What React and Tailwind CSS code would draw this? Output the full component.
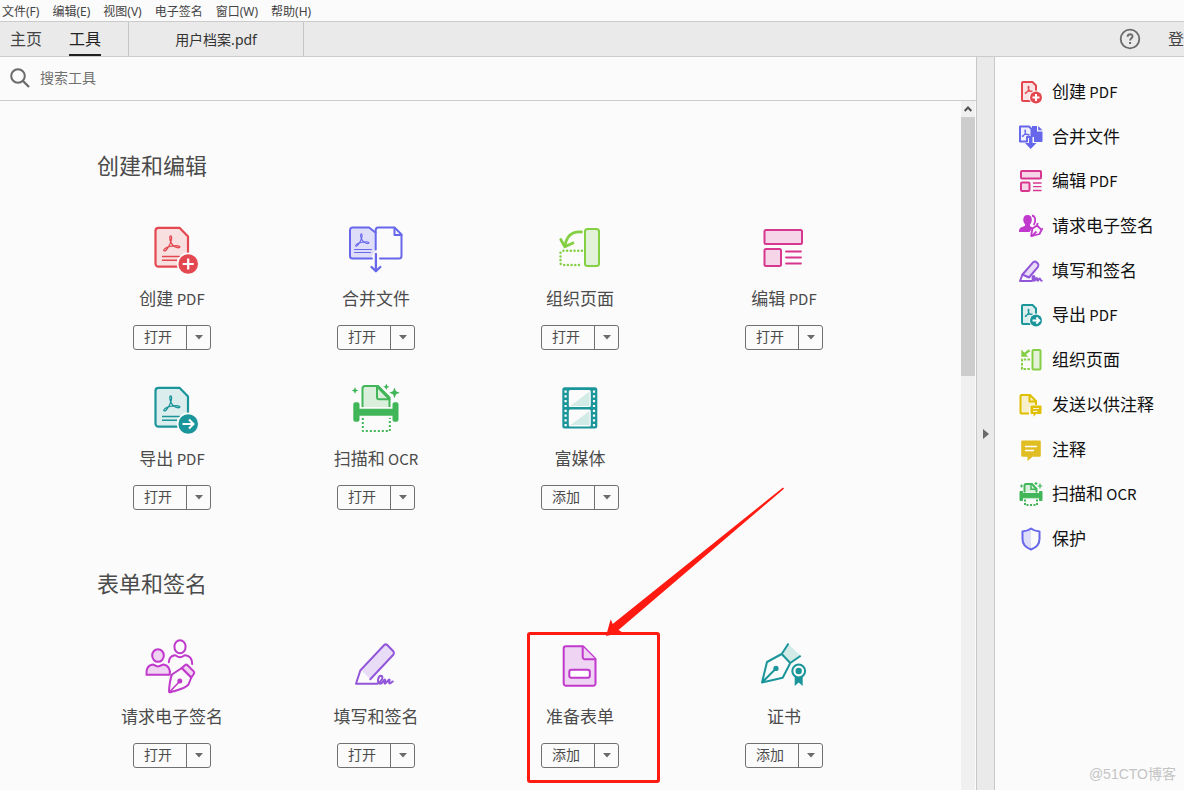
import React, { useState } from 'react';

const menus = ['文件(F)', '编辑(E)', '视图(V)', '电子签名', '窗口(W)', '帮助(H)'];

const AcrobatMark = (props) => (
  <path
    fill="none"
    strokeLinecap="round"
    strokeLinejoin="round"
    d="M26.8 22c-1.400-3.200-1.200-6-.1-6s1.200 2.400.3 5.400c-1.200 3.400-3 7-5 8.800-1.400 1.200-2.600.8-2-.4.8-1.500 4.300-3.100 7.600-3.700 3-.6 7-.5 8 .4.7.8-.5 1.500-2.200 1.100-2.800-.6-5.400-2.700-6.600-5.600z"
    {...props}
  />
);

const PdfPage = ({ color, fill }) => (
  <>
    <path d="M14.500 7.800h21L44 16.500V46.700H14.500a3 3 0 0 1-3-3V10.800a3 3 0 0 1 3-3z" fill={fill} stroke={color} strokeWidth="2.200" strokeLinejoin="round" />
    <AcrobatMark stroke={color} strokeWidth="1.300" />
    <path d="M18 36.500h18M18 40.300h15" stroke={color} strokeWidth="1.500" />
    <circle cx="44.200" cy="44" r="11.400" fill="#fbfbfb" />
    <circle cx="44.200" cy="44" r="9.800" fill={color} />
  </>
);

const CreateIcon = () => (
  <>
    <PdfPage color="#e34850" fill="#f8dfe0" />
    <path d="M44.200 38.500v11M38.700 44h11" stroke="#fff" strokeWidth="2.200" />
  </>
);

const ExportIcon = () => (
  <>
    <PdfPage color="#1a959a" fill="#dceded" />
    <path d="M38.500 44h10.500M45 39.500l4.500 4.500-4.500 4.500" fill="none" stroke="#fff" strokeWidth="2" />
  </>
);

const CombineIcon = () => (
  <g fill="none" stroke="#6767ec" strokeWidth="2" strokeLinejoin="round" strokeLinecap="round">
    <path d="M24 38.500H4.500a2.500 2.500 0 0 1-2.500-2.500V10a2.500 2.500 0 0 1 2.500-2.500H21l6.500 5V30L24 36z" fill="#dedef8" stroke="none" />
    <path d="M24 38.500H4.500a2.500 2.500 0 0 1-2.500-2.500V10a2.500 2.500 0 0 1 2.500-2.500H21l6.500 5" />
    <path d="M27.700 29.500V10a2.500 2.500 0 0 1 2.500-2.500H46.500l7 7V36a2.500 2.500 0 0 1-2.500 2.500H32" />
    <path d="M46.500 8v7h7" />
    <AcrobatMark transform="translate(-8.800 .5) scale(.83)" strokeWidth="1.300" />
    <path d="M6.500 29.500h17M6.500 32.500h16" strokeWidth="1" />
    <path d="M27.900 34v17M23.500 47l4.400 4.300 4.400-4.300" strokeWidth="2.300" />
  </g>
);

const OrganizeIcon = () => (
  <g fill="none" stroke="#84cf44" strokeLinecap="round" strokeLinejoin="round">
    <rect x="33" y="9" width="14" height="37" rx="2.500" fill="#e4f1d9" strokeWidth="2" />
    <path d="M29.500 12c-9-.8-15 4-16.500 14" strokeWidth="2.800" />
    <path d="M8.800 19.500l4 7.300 8.200-3.800" strokeWidth="2.800" />
    <path d="M30 30.800H10.500a2 2 0 0 0-2 2V43a2 2 0 0 0 2 2H30" strokeWidth="2.400" strokeDasharray=".1 3.600" />
  </g>
);

const EditIcon = () => (
  <g fill="#f5d5e7" stroke="#d83790" strokeWidth="2" strokeLinecap="round">
    <rect x="8.500" y="10" width="37.500" height="14" rx="1.500" />
    <rect x="8.500" y="29" width="16.500" height="17" rx="1.500" />
    <path d="M30 31.500h15M30 37.500h15M30 43.500h15" strokeWidth="1.800" />
  </g>
);

const ScanIcon = () => (
  <g stroke="#41b658" fill="none" strokeWidth="2" strokeLinejoin="round">
    <path d="M14.500 27V8.500a2.500 2.500 0 0 1 2.500-2.500h13L41.500 17.500V27" fill="#d9efdc" />
    <path d="M29 6.500v10.700a2 2 0 0 0 2 2H41.500z" fill="#d9efdc" />
    <path d="M7 22.300h2.500a2 2 0 0 1 2 2v4.400h33v-4.400a2 2 0 0 1 2-2h2.500a2 2 0 0 1 1.500 2v15.400a2 2 0 0 1-2 2h-2a2 2 0 0 1-2-2v-4h-33v4a2 2 0 0 1-2 2h-2.200a2 2 0 0 1-2-2V24.300a2 2 0 0 1 1.700-2z" fill="#41b658" stroke="none" />
    <path d="M14.800 38v13h27V38" strokeDasharray="2 2" />
    <g fill="#41b658" stroke="none">
      <path d="M7 7l1 2.400 2.400 1L8 11.400 7 14l-1-2.600-2.400-1L6 9.400zM38.300 3.500l1 2.400 2.200.9-2.200.9-1 2.400-1-2.400-2.200-.9 2.200-.9zM46.500 7.500l1.500 3.800 3.800 1.500-3.800 1.500-1.500 3.900-1.500-3.900-3.800-1.500 3.800-1.500z" />
    </g>
  </g>
);

const MediaIcon = () => (
  <>
    <rect x="10.300" y="7.300" width="35" height="41.200" rx="2.500" fill="#1a959a" />
    <rect x="16.800" y="10" width="22" height="17" rx="1.500" fill="#fbfbfb" />
    <rect x="16.800" y="29.500" width="22" height="17" rx="1.500" fill="#fbfbfb" />
    <path d="M37.500 11.500V26H18.500zM37.500 31v14H18.500z" fill="#d3ebe6" />
    <path d="M13.600 10.500v36M42 10.500v36" stroke="#fff" strokeWidth="2.200" strokeDasharray="2.200 2.600" />
  </>
);

const RequestIcon = () => (
  <g fill="none" stroke="#c038cc" strokeWidth="2" strokeLinejoin="round" strokeLinecap="round">
    <ellipse cx="14" cy="17.500" rx="5.800" ry="6.300" fill="#f0d3f2" />
    <path d="M2.500 36.800c-.6-6 1.500-9.400 6-10.300 1.500-.2 2.500 1.900 5.500 1.900s4-2.100 5.500-1.900c4.500.9 7 4.300 6.300 10.300z" fill="#f0d3f2" />
    <ellipse cx="36" cy="8.700" rx="5.600" ry="6.500" />
    <path d="M24.800 24.300c.3-4 2.500-6.500 6-7 1.500-.2 2.200 2 5.200 2s3.700-2.200 5.200-2c4.300.6 7 3.700 7 8.700" />
    <path d="M37.800 30l9.500 9.500-2.800 7c-4 4.500-9 5-18 7.700-1.200.2-1.700-.3-1.500-1.500.4-5 .8-11 3-16.200z" />
    <path d="M37.800 30l3.400-3q1.200-.8 2.300.2l6.200 6.200q1 1.200.2 2.300l-2.600 3.800z" fill="#f0d3f2" />
    <path d="M26 53.500l9.500-10" strokeWidth="1.600" />
    <circle cx="35.800" cy="43" r="1.500" fill="#c038cc" />
  </g>
);

const SignIcon = () => (
  <g fill="none" stroke="#9256d9" strokeWidth="2" strokeLinejoin="round" strokeLinecap="round">
    <path d="M14 33L36 8.500q1.700-1.500 3.500 0l6 5q1 1.500 0 3L22 41z" fill="#e8dcf6" stroke="none" />
    <path d="M22.300 41.300L45.500 16.500q1-1.500 0-3l-6-6.300q-1.700-1.700-3.500 0L12.300 32.500 8 45.700h21c5-2 7-7.700 4-8-3 0-4.700 8 -.5 8 2.500 0 3-4.200 4.200-4.200s-1 4.200 .3 4.200 2.800-4.200 4.200-4.200-1.200 4 .6 4c1.300 0 2-2 3-2" />
  </g>
);

const FormIcon = () => (
  <g stroke="#c038cc" strokeWidth="2" strokeLinejoin="round" fill="#efd5f3">
    <path d="M14 8.300H31L43.500 21v24.500a2.300 2.300 0 0 1-2.300 2.300H14a2.300 2.300 0 0 1-2.300-2.300V10.600A2.300 2.300 0 0 1 14 8.300z" />
    <path d="M30.700 8.500V19a2.300 2.300 0 0 0 2.300 2.300H43.500" />
    <rect x="17.300" y="31.700" width="20.500" height="8" rx="2" fill="#fff" />
  </g>
);

const CertificateIcon = () => (
  <g fill="none" stroke="#1a959a" strokeWidth="2" strokeLinejoin="round">
    <path d="M25.700 16L32.300 6 44.500 17.800 34.300 25z" fill="#d3ebe6" stroke="none" />
    <path d="M32.500 5.500L25.700 16 11 24 6 44.500l20.700-4.800L34.300 25 44.700 17.700M25.700 16l8.600 9M6 44.500L20 30.500" />
    <circle cx="20" cy="30.400" r="2.600" fill="#1a959a" stroke="none" />
    <path d="M38.700 38h8v10l-4-3.500-4 3.500z" fill="#1a959a" stroke="none" />
    <circle cx="42.700" cy="33" r="6.400" fill="#fbfbfb" />
    <circle cx="42.700" cy="33" r="3.200" fill="#1a959a" stroke="none" />
  </g>
);

// 24px variants used by the right hand pane
const SmallPage = ({ color, fill }) => (
  <>
    <path d="M4 2h9.500L17 5.500V21H4a1 1 0 0 1-1-1V3a1 1 0 0 1 1-1z" fill={fill} stroke={color} strokeWidth="2" strokeLinejoin="round" />
    <AcrobatMark transform="translate(-3.300 -1.300) scale(.48)" stroke={color} strokeWidth="2.200" />
    <circle cx="17" cy="17.500" r="7" fill="#fbfbfb" />
    <circle cx="17" cy="17.500" r="6" fill={color} />
  </>
);

const SmallCreate = () => (
  <>
    <SmallPage color="#e34850" fill="#fae3e4" />
    <path d="M17 14v7M13.500 17.500h7" stroke="#fff" strokeWidth="2" />
  </>
);

const SmallExport = () => (
  <>
    <SmallPage color="#1a959a" fill="#dceded" />
    <path d="M13.500 17.500h6M17.300 14.500l3 3-3 3" fill="none" stroke="#fff" strokeWidth="2" />
  </>
);

const SmallCombine = () => (
  <>
    <path d="M1 1.500h9l2.500 2.500V12H8v4.500H1z" fill="#f0f0fd" stroke="#6767ec" strokeWidth="2" strokeLinejoin="round" />
    <AcrobatMark transform="translate(-5.500 -2) scale(.44)" stroke="#6767ec" strokeWidth="2.300" />
    <path d="M13 1h5v5.500h5.500V16a1 1 0 0 1-1 1H15v-5h-2zM19.200 1l4.300 4.300h-4.300z" fill="#6767ec" />
    <path d="M10 12.500h3.500V18h4L11.700 24 6 18h4z" fill="#6767ec" />
  </>
);

const SmallEdit = () => (
  <g fill="#f5d5e7" stroke="#d83790" strokeWidth="2">
    <rect x="2" y="2" width="20" height="7.500" rx="1" />
    <rect x="2" y="13.500" width="8.500" height="8.500" rx="1" />
    <path d="M14 14h8.500M14 17.700h8.500M14 21.500h8.500" strokeWidth="1.300" />
  </g>
);

const SmallRequest = () => (
  <>
    <path d="M8.500 1c3 0 4.300 2 4.300 4.800 0 2.200-.8 3.500-1.800 4.700-.5 2 1 2.300 3 3L10.500 18H0c0-3.500 1-4.500 4.500-5.500 1.700-.5 2-1.300 1.500-2.300C5 9 4.300 8 4.300 5.800 4.300 3 5.700 1 8.500 1z" fill="#c038cc" />
    <path d="M13 1.500c3.500.5 4.300 6 1.700 9.500" fill="none" stroke="#c038cc" strokeWidth="1.800" />
    <path d="M18 11.500l4.500 4.300-2 4.200-7.500 2c-.8 0-1-.2-.8-1l1.300-6.500z" fill="#fbfbfb" stroke="#c038cc" strokeWidth="1.800" strokeLinejoin="round" />
    <path d="M13 22l4.500-4.500M18 11.500l.7-2.500M22.500 15.500l1.500-1" stroke="#c038cc" strokeWidth="1.800" />
  </>
);

const SmallSign = () => (
  <g fill="none" stroke="#9256d9" strokeWidth="2" strokeLinecap="round" strokeLinejoin="round">
    <path d="M10 18.500L19 7.800q1-1.500 0-3L17.500 3.200q-1.600-1.400-3.200 0L3.500 15.500z" fill="#e8dcf6" />
    <path d="M3.500 15.500L1 22h12c2.300-1.500 3.200-4.800 1.700-5-1.700 0-1.500 4.800.5 4.800 1.500 0 1.500-2.800 2.500-2.800s0 2.800 1 2.800 1-2.300 2-2.300.5 2.300 2 2.300" />
  </g>
);

const SmallOrganize = () => (
  <g fill="none" stroke="#84cf44" strokeWidth="2">
    <rect x="13.500" y="2" width="8" height="19.500" rx="1" fill="#e4f1d9" />
    <path d="M2.300 1.500v7.200h7z" fill="#84cf44" stroke="none" />
    <path d="M10.500 2.200L4.500 6.800" strokeWidth="2.400" />
    <path d="M11 11.500H3V21h8" strokeDasharray="2.500 1.300" />
  </g>
);

const SmallSend = () => (
  <>
    <path d="M9.500 20.500H2.500a1 1 0 0 1-1-1V3a1 1 0 0 1 1-1H11l6 6v4H11z" fill="#f6efc9" />
    <path d="M10 20.500H2.500a1 1 0 0 1-1-1V3a1 1 0 0 1 1-1H11l6 6v4M10.500 2.500V8.500H17" fill="none" stroke="#dfbf00" strokeWidth="2" strokeLinejoin="round" />
    <path d="M12.500 12.500h9a1 1 0 0 1 1 1V20a1 1 0 0 1-1 1H17l-2.500 2.800V21h-2a1 1 0 0 1-1-1v-6.500a1 1 0 0 1 1-1z" fill="#dfbf00" />
    <path d="M14 15.500h6M14 18.300h4.500" stroke="#f6efc9" strokeWidth="1.200" />
  </>
);

const SmallComment = () => (
  <>
    <path d="M3.500 2.500h17a1.300 1.300 0 0 1 1.300 1.300V17.500a1.300 1.300 0 0 1-1.300 1.300H13.500L8.500 23v-4.200h-5a1.300 1.300 0 0 1-1.300-1.300V3.800a1.300 1.300 0 0 1 1.300-1.300z" fill="#e0be22" />
    <path d="M6 8.500h12M6 12.500h9" stroke="#fff" strokeWidth="1.600" />
  </>
);

const SmallShield = () => (
  <>
    <path d="M12 1.500C9 3.800 6 4.300 3.500 4.500V12c0 5.500 3.500 8.700 8.500 10.500z" fill="#dedef8" />
    <path d="M12 1.500c3 2.300 6 2.800 8.500 3V12c0 5.500-3.500 8.700-8.500 10.500C7 20.700 3.500 17.500 3.500 12V4.500C6 4.300 9 3.800 12 1.500z" fill="none" stroke="#6767ec" strokeWidth="2" strokeLinejoin="round" />
  </>
);

const SmallScan = () => (
  <g stroke="#41b658" fill="none">
    <path d="M5.500 10.500V3.500q0-1.500 1.500-1.500h6L17.500 7v3.500" fill="#d9efdc" strokeWidth="2" />
    <path d="M12 2.500v4.800h5.500" strokeWidth="1.500" />
    <path d="M1 9.500h2.500v2h17v-2H23V18.500h-2.500v-2.700h-17v2.700H1z" fill="#41b658" strokeWidth="1" strokeLinejoin="round" />
    <path d="M6 17.500V23h12v-5.500" strokeWidth="2" strokeDasharray="2 1.500" />
    <path d="M2.500 2.500v3M1 4h3M17 0v3M15.500 1.500h3M21 1.500v5M18.700 4h4.600" strokeWidth="1.200" />
  </g>
);

const sections = [
  {
    title: '创建和编辑',
    tools: [
      { name: '创建', latin: ' PDF', action: '打开', Icon: CreateIcon },
      { name: '合并文件', action: '打开', Icon: CombineIcon },
      { name: '组织页面', action: '打开', Icon: OrganizeIcon },
      { name: '编辑', latin: ' PDF', action: '打开', Icon: EditIcon },
      { name: '导出', latin: ' PDF', action: '打开', Icon: ExportIcon },
      { name: '扫描和', latin: ' OCR', action: '打开', Icon: ScanIcon },
      { name: '富媒体', action: '添加', Icon: MediaIcon },
    ],
  },
  {
    title: '表单和签名',
    tools: [
      { name: '请求电子签名', action: '打开', Icon: RequestIcon },
      { name: '填写和签名', action: '打开', Icon: SignIcon },
      { name: '准备表单', action: '添加', Icon: FormIcon, marked: true },
      { name: '证书', action: '添加', Icon: CertificateIcon },
    ],
  },
];

const shortcuts = [
  { name: '创建', latin: ' PDF', Icon: SmallCreate },
  { name: '合并文件', Icon: SmallCombine },
  { name: '编辑', latin: ' PDF', Icon: SmallEdit },
  { name: '请求电子签名', Icon: SmallRequest },
  { name: '填写和签名', Icon: SmallSign },
  { name: '导出', latin: ' PDF', Icon: SmallExport },
  { name: '组织页面', Icon: SmallOrganize },
  { name: '发送以供注释', Icon: SmallSend },
  { name: '注释', Icon: SmallComment },
  { name: '扫描和', latin: ' OCR', Icon: SmallScan },
  { name: '保护', Icon: SmallShield },
];

// Latin letters run a little smaller than the Chinese ones
const Label = ({ name, latin }) => (
  <span className="block pb-0.5 font-['Noto_Sans_CJK_SC',sans-serif] text-[17px] leading-[22px] whitespace-pre">
    {name}
    {latin && <span className="text-[15px] leading-none">{latin}</span>}
  </span>
);

const Marker = () => (
  <div className="pointer-events-none absolute -top-1.5 left-1/2 z-10 -ml-[53px] h-[151px] w-[133px] rounded-[3px] border-3 border-[#ff1a12]" aria-hidden="true">
    <svg className="absolute -top-[149px] left-[74px]" width="182" height="152" viewBox="0 0 182 152">
      <path d="M2 150L6.700 133.300 8.700 138 179 1.500 180 2.700 14.500 144 18.700 146.500z" fill="#ff1a12" />
    </svg>
  </div>
);

const ToolCard = ({ tool }) => {
  const { Icon } = tool;
  return (
    <li className="relative flex flex-col items-center">
      <svg width="56" height="56" viewBox="0 0 56 56" aria-hidden="true">
        <Icon />
      </svg>
      <h3 className="mt-[11px] text-[#4b4b4b]">
        <Label name={tool.name} latin={tool.latin} />
      </h3>
      <div className="mt-3.5 flex h-[25px] rounded-[3px] border border-[#707070] text-sm text-[#4b4b4b]">
        <button type="button" className="flex w-[52px] items-center justify-center pr-1 pb-0.5">
          {tool.action}
        </button>
        <button
          type="button"
          className="flex w-6 items-center justify-center border-l border-[#707070]"
          aria-label={`${tool.name}${tool.latin ?? ''} 选项`}
        >
          <svg width="8" height="5" viewBox="0 0 8 5">
            <path d="M0 0h8L4 4.500z" fill="#6a6a6a" />
          </svg>
        </button>
      </div>
      {tool.marked && <Marker />}
    </li>
  );
};

const App = () => {
  const [query, setQuery] = useState('');

  return (
    <div className="flex h-screen flex-col overflow-hidden bg-[#fbfbfb] font-['Noto_Sans','Noto_Sans_CJK_SC',sans-serif]">
      <nav className="flex h-[22px] shrink-0 items-center gap-[13px] border-b border-[#cbcbcb] pt-0.5 pl-0.5 text-xs text-[#444]">
        {menus.map((m) => (
          <button key={m} type="button" className="leading-5">
            {m}
          </button>
        ))}
      </nav>

      <header className="flex h-[35px] shrink-0 border-b border-[#cbcbcb] bg-[#eaeaea] text-base text-[#444]">
        <button type="button" className="pl-2.5">
          主页
        </button>
        <div className="flex border-r border-[#c6c6c6] pr-[27px] pl-[27px]">
          <button type="button" className="border-b-2 border-[#222] pt-0.5 text-[#222]">
            工具
          </button>
        </div>
        <button type="button" className="w-[175px] border-r border-[#c6c6c6] pt-0.5 text-sm text-[#333]">
          用户档案.pdf
        </button>
        <div className="ml-auto flex items-center gap-[27px]">
          <button type="button" aria-label="帮助">
            <svg width="22" height="22" viewBox="0 0 22 22" fill="none" stroke="#6a6a6a">
              <circle cx="11" cy="11" r="9.300" strokeWidth="1.800" />
              <path d="M8.600 8.800c.1-3.400 5-3.200 4.900-.3 0 1.800-2.400 1.800-2.400 4" strokeWidth="1.900" />
              <path d="M11.100 14v2" strokeWidth="2" />
            </svg>
          </button>
          <a href="#login">登</a>
        </div>
      </header>

      <div className="flex min-h-0 flex-1">
        <main className="flex min-w-0 flex-1 flex-col">
          <label className="flex h-11 shrink-0 items-center gap-2.5 border-b border-[#cbcbcb] pb-0.5 pl-2.5">
            <svg width="20" height="20" viewBox="0 0 20 20" fill="none" stroke="#6a6a6a" strokeWidth="2" aria-hidden="true">
              <circle cx="8" cy="8" r="6.800" />
              <path d="M13 13l6 6" strokeWidth="2.300" />
            </svg>
            <input
              type="text"
              aria-label="搜索工具"
              placeholder="搜索工具"
              className="flex-1 text-sm text-[#333] outline-none placeholder:text-[#707070]"
              value={query}
              onChange={(e) => setQuery(e.target.value)}
            />
          </label>

          <div className="flex min-h-0 flex-1">
            <div className="flex-1 overflow-hidden pt-12 pr-[75px] pl-[70px]">
              {sections.map((s) => (
                <section key={s.title} className="mb-[57px]">
                  <h2 className="pl-[27px] text-[22px] leading-8 text-[#4b4b4b]">{s.title}</h2>
                  <ul className="mt-[39px] grid grid-cols-4 gap-y-[30px]">
                    {s.tools.map((t) => (
                      <ToolCard key={t.name} tool={t} />
                    ))}
                  </ul>
                </section>
              ))}
            </div>
            <div className="mr-px w-3.5 bg-[#f0f0f0]" aria-hidden="true">
              <div className="flex h-4 items-center justify-center">
                <svg width="8" height="6" viewBox="0 0 8 6" fill="none" stroke="#505050" strokeWidth="2">
                  <path d="M.7 5L4 1.500 7.300 5" />
                </svg>
              </div>
              <div className="h-[259px] bg-[#cdcdcd]" />
            </div>
          </div>
        </main>

        <button
          type="button"
          className="flex w-[19px] shrink-0 items-center justify-center border-x border-[#c8c8c8] bg-[#eaeaea] pt-5"
          aria-label="收起窗格"
        >
          <svg width="6" height="10" viewBox="0 0 6 10">
            <path d="M0 0l6 5-6 5z" fill="#6a6a6a" />
          </svg>
        </button>

        <aside className="flex w-[189px] shrink-0 flex-col pt-[13px] pl-6">
          <ul className="flex h-[491px] flex-col justify-between">
            {shortcuts.map(({ name, latin, Icon }) => (
              <li key={name}>
                <button type="button" className="flex h-11 items-center gap-[9px] text-[#111]">
                  <svg width="24" height="24" viewBox="0 0 24 24" aria-hidden="true">
                    <Icon />
                  </svg>
                  <Label name={name} latin={latin} />
                </button>
              </li>
            ))}
          </ul>
          <p className="mt-auto mr-2 mb-1.5 self-end font-['Liberation_Sans','Noto_Sans_CJK_SC',sans-serif] text-sm text-[#c4c4c4]">
            @51CTO博客
          </p>
        </aside>
      </div>
    </div>
  );
};

export default App;
